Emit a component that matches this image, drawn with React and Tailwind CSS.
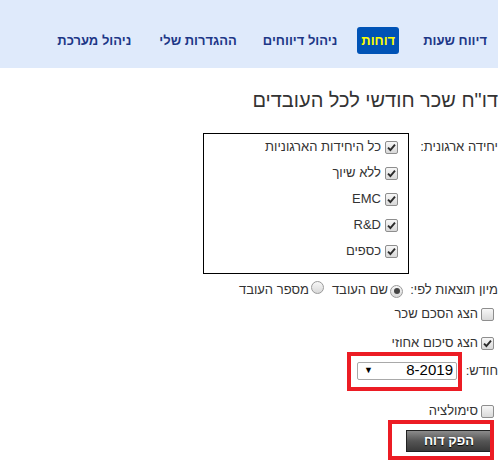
import React from "react";

const units = ["כל היחידות הארגוניות", "ללא שיוך", "EMC", "R&D", "כספים"];

function Check({ checked }) {
  return (
    <span className="inline-flex w-[13px] h-[13px] shrink-0 items-center justify-center rounded-[2px] border border-[#8e8e8e] bg-gradient-to-b from-[#f7f7f7] to-[#d9d9d9]">
      {checked && (
        <svg width="9" height="9" viewBox="0 0 9 9">
          <path d="M1 4.6 L3.4 7 L8 1.6" fill="none" stroke="#2b2b2b" strokeWidth="1.9" />
        </svg>
      )}
    </span>
  );
}

function Radio({ checked }) {
  return (
    <span className="inline-flex w-[13px] h-[13px] shrink-0 items-center justify-center rounded-full border border-[#9a9a9a] bg-gradient-to-b from-[#f7f7f7] to-[#d9d9d9]">
      {checked && <span className="w-[6px] h-[6px] rounded-full bg-[#444]" />}
    </span>
  );
}

export default function App() {
  return (
    <div dir="rtl" className="min-h-screen bg-white overflow-hidden font-['Arial','Liberation_Sans',sans-serif] text-[13px] text-[#333]">
      <div className="h-[68px] bg-[#dfeafb] flex items-end pb-[14px] pr-[11px]">
        <nav className="flex items-center font-bold text-[#1d3787] whitespace-nowrap">
          <span className="h-[27px] flex items-center">דיווח שעות</span>
          <span className="mr-[24px] h-[27px] flex items-center px-[4px] rounded-[3px] bg-[#0053b6] text-[#ffff00]">דוחות</span>
          <span className="mr-[20px] h-[27px] flex items-center">ניהול דיווחים</span>
          <span className="mr-[26px] h-[27px] flex items-center">ההגדרות שלי</span>
          <span className="mr-[28px] h-[27px] flex items-center">ניהול מערכת</span>
        </nav>
      </div>

      <h1 className="mt-[20px] h-[24px] leading-[24px] text-[20px] text-[#333] whitespace-nowrap">דו"ח שכר חודשי לכל העובדים</h1>

      <div className="mt-[21px] flex gap-[9px]">
        <div className="w-[80px] pt-[4px] whitespace-nowrap">יחידה ארגונית:</div>
        <div className="w-[206px] h-[141px] border border-black pr-[10px]">
          {units.map((u) => (
            <div key={u} className="h-[26px] flex items-center gap-[4px]">
              <Check checked />
              <span>{u}</span>
            </div>
          ))}
        </div>
      </div>

      <div className="mt-[6px] h-[20px] flex items-center whitespace-nowrap">
        <span className="w-[84px]">מיון תוצאות לפי:</span>
        <span className="mr-[11px]"><Radio checked /></span>
        <span className="mr-[2px]">שם העובד</span>
        <span className="mr-[8px]"><Radio /></span>
        <span className="mr-[2px]">מספר העובד</span>
      </div>

      <div className="mt-[2px] h-[24px] flex items-center gap-[3px] pr-[4px]">
        <Check />
        <span>הצג הסכם שכר</span>
      </div>

      <div className="mt-[5px] h-[24px] flex items-center gap-[3px] pr-[4px]">
        <Check checked />
        <span>הצג סיכום אחוזי</span>
      </div>

      <div className="mt-[5px] h-[21px] flex items-center">
        <span className="w-[41px] whitespace-nowrap">חודש:</span>
        <div className="relative">
          <div className="w-[100px] h-[18px] flex items-center justify-between pr-[3px] pl-[6px] border border-[#a9a9a9] rounded-[2px] bg-white text-[15px] text-black">
            <span>8-2019</span>
            <span className="text-[9px]">▼</span>
          </div>
          <div className="absolute -left-[10px] -right-[5px] -top-[10px] -bottom-[11px] border-4 border-[#ec1c24]" />
        </div>
      </div>

      <div className="mt-[18px] h-[24px] flex items-center gap-[3px] pr-[4px]">
        <Check />
        <span>סימולציה</span>
      </div>

      <div className="mt-[7px] pr-[6px] flex">
        <div className="relative">
          <button className="w-[86px] h-[22px] flex items-center justify-center border border-[#222] bg-gradient-to-b from-[#8c8c8c] via-[#555] to-[#3a3a3a] text-white font-bold text-[13px] [text-shadow:0_1px_1px_#000]">
            הפק דוח
          </button>
          <div className="absolute -left-[18px] -right-[2px] -top-[10px] -bottom-[8px] border-4 border-[#ec1c24]" />
        </div>
      </div>
    </div>
  );
}
